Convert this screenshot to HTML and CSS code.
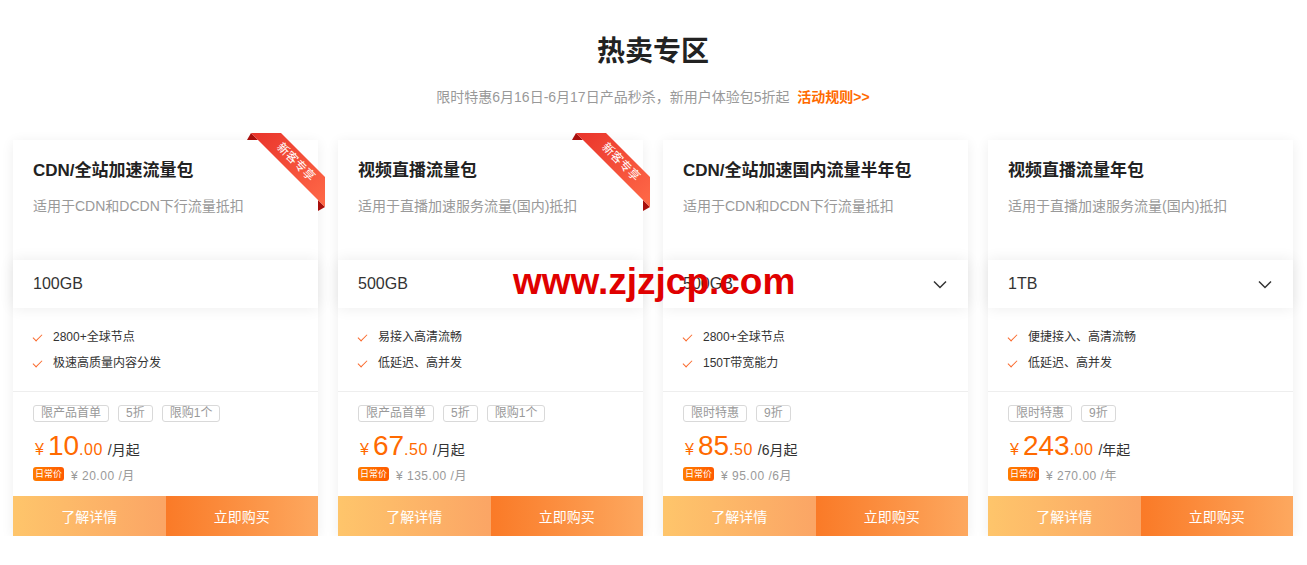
FILE: index.html
```html
<!DOCTYPE html>
<html>
<head>
    <title>热卖专区</title>
    <link rel="stylesheet" href="styles.css">
</head>
<body>
    <div class="hot">
        <h2 class="hot-title">热卖专区</h2>
        <p class="hot-sub">限时特惠6月16日-6月17日产品秒杀，新用户体验包5折起 <a class="rule" href="#">活动规则&gt;&gt;</a></p>

        <div class="cards">
            <div class="card">
                <svg class="ribbon" width="78" height="78" viewBox="0 0 78 78">
                    <defs>
                        <linearGradient id="rb1" x1="0" y1="0" x2="1" y2="1">
                            <stop offset="0" stop-color="#e9342b"/>
                            <stop offset="1" stop-color="#ff6a48"/>
                        </linearGradient>
                    </defs>
                    <polygon points="0,7 4,0 11,7" fill="#a80f0c"/>
                    <polygon points="78,74 71,67 71,78" fill="#a80f0c"/>
                    <polygon points="4,0 34,0 78,44 78,74" fill="url(#rb1)"/>
                    <text x="49" y="33" transform="rotate(45 49 29)" text-anchor="middle" class="ribbon-text">新客专享</text>
                </svg>
                <div class="card-top">
                    <h3>CDN/全站加速流量包</h3>
                    <p>适用于CDN和DCDN下行流量抵扣</p>
                </div>
                <div class="spec">100GB</div>
                <ul class="feats">
                    <li>2800+全球节点</li>
                    <li>极速高质量内容分发</li>
                </ul>
                <div class="buy">
                    <div class="tags"><span>限产品首单</span><span>5折</span><span>限购1个</span></div>
                    <div class="price"><span class="cur">¥</span><span class="int">10</span><span class="dec">.00</span><span class="unit">/月起</span></div>
                    <div class="daily"><span class="badge">日常价</span>¥ 20.00 /月</div>
                </div>
                <div class="btns"><a class="more" href="#">了解详情</a><a class="now" href="#">立即购买</a></div>
            </div>

            <div class="card">
                <svg class="ribbon" width="78" height="78" viewBox="0 0 78 78">
                    <defs>
                        <linearGradient id="rb2" x1="0" y1="0" x2="1" y2="1">
                            <stop offset="0" stop-color="#e9342b"/>
                            <stop offset="1" stop-color="#ff6a48"/>
                        </linearGradient>
                    </defs>
                    <polygon points="0,7 4,0 11,7" fill="#a80f0c"/>
                    <polygon points="78,74 71,67 71,78" fill="#a80f0c"/>
                    <polygon points="4,0 34,0 78,44 78,74" fill="url(#rb2)"/>
                    <text x="49" y="33" transform="rotate(45 49 29)" text-anchor="middle" class="ribbon-text">新客专享</text>
                </svg>
                <div class="card-top">
                    <h3>视频直播流量包</h3>
                    <p>适用于直播加速服务流量(国内)抵扣</p>
                </div>
                <div class="spec">500GB</div>
                <ul class="feats">
                    <li>易接入高清流畅</li>
                    <li>低延迟、高并发</li>
                </ul>
                <div class="buy">
                    <div class="tags"><span>限产品首单</span><span>5折</span><span>限购1个</span></div>
                    <div class="price"><span class="cur">¥</span><span class="int">67</span><span class="dec">.50</span><span class="unit">/月起</span></div>
                    <div class="daily"><span class="badge">日常价</span>¥ 135.00 /月</div>
                </div>
                <div class="btns"><a class="more" href="#">了解详情</a><a class="now" href="#">立即购买</a></div>
            </div>

            <div class="card">
                <div class="card-top">
                    <h3>CDN/全站加速国内流量半年包</h3>
                    <p>适用于CDN和DCDN下行流量抵扣</p>
                </div>
                <div class="spec">500GB
                    <svg class="arrow" width="14" height="9" viewBox="0 0 14 9"><path d="M1 1.5 L7 7.5 L13 1.5" fill="none" stroke="#333" stroke-width="1.5"/></svg>
                </div>
                <ul class="feats">
                    <li>2800+全球节点</li>
                    <li>150T带宽能力</li>
                </ul>
                <div class="buy">
                    <div class="tags"><span>限时特惠</span><span>9折</span></div>
                    <div class="price"><span class="cur">¥</span><span class="int">85</span><span class="dec">.50</span><span class="unit">/6月起</span></div>
                    <div class="daily"><span class="badge">日常价</span>¥ 95.00 /6月</div>
                </div>
                <div class="btns"><a class="more" href="#">了解详情</a><a class="now" href="#">立即购买</a></div>
            </div>

            <div class="card">
                <div class="card-top">
                    <h3>视频直播流量年包</h3>
                    <p>适用于直播加速服务流量(国内)抵扣</p>
                </div>
                <div class="spec">1TB
                    <svg class="arrow" width="14" height="9" viewBox="0 0 14 9"><path d="M1 1.5 L7 7.5 L13 1.5" fill="none" stroke="#333" stroke-width="1.5"/></svg>
                </div>
                <ul class="feats">
                    <li>便捷接入、高清流畅</li>
                    <li>低延迟、高并发</li>
                </ul>
                <div class="buy">
                    <div class="tags"><span>限时特惠</span><span>9折</span></div>
                    <div class="price"><span class="cur">¥</span><span class="int">243</span><span class="dec">.00</span><span class="unit">/年起</span></div>
                    <div class="daily"><span class="badge">日常价</span>¥ 270.00 /年</div>
                </div>
                <div class="btns"><a class="more" href="#">了解详情</a><a class="now" href="#">立即购买</a></div>
            </div>
        </div>

        <div class="watermark">www.zjzjcp.com</div>
    </div>
</body>
</html>
```

FILE: styles.css
```css
body {
    margin: 0;
    background-color: #fff;
    font-family: "Liberation Sans", "Noto Sans CJK SC", sans-serif;
    color: #333;
}
.hot {
    position: relative;
    width: 1280px;
    margin: 0 0 0 13px;
    padding-top: 32px;
}
.hot-title {
    margin: 0;
    font-size: 28px;
    line-height: 40px;
    font-weight: bold;
    color: #222;
    text-align: center;
}
.hot-sub {
    margin: 15px 0 0;
    font-size: 14px;
    line-height: 20px;
    color: #999;
    text-align: center;
}
.rule {
    margin-left: 4px;
    color: #ff6a00;
    font-weight: bold;
    text-decoration: none;
}
.cards {
    display: grid;
    grid-template-columns: repeat(4, 1fr);
    gap: 20px;
    margin-top: 33px;
}
.card {
    position: relative;
    background-color: #fff;
    box-shadow: 0 2px 12px rgba(0, 0, 0, 0.07);
}
.ribbon {
    position: absolute;
    top: -7px;
    right: -7px;
    z-index: 3;
}
.ribbon-text {
    font-family: "Noto Sans CJK SC", sans-serif;
    font-size: 12px;
    fill: #fff;
}
.card-top {
    height: 120px;
    padding: 19px 20px 0;
    box-sizing: border-box;
}
.card-top h3 {
    margin: 0;
    font-size: 17px;
    line-height: 24px;
    font-weight: bold;
    color: #222;
}
.card-top p {
    margin: 13px 0 0;
    font-size: 14px;
    line-height: 20px;
    color: #999;
}
.spec {
    position: relative;
    z-index: 1;
    display: flex;
    justify-content: space-between;
    align-items: center;
    height: 48px;
    padding: 0 20px;
    font-size: 16px;
    color: #333;
    background-color: #fff;
    box-shadow: 0 0 14px rgba(0, 0, 0, 0.08);
}
.arrow {
    margin-right: 1px;
}
.feats {
    list-style: none;
    margin: 0;
    padding: 16px 20px 15px;
    border-bottom: 1px solid #eee;
}
.feats li {
    position: relative;
    padding-left: 20px;
    font-size: 12px;
    line-height: 26px;
    color: #333;
}
.feats li::before {
    content: "";
    position: absolute;
    left: 2px;
    top: 8px;
    width: 4px;
    height: 8px;
    border-right: 1.5px solid #fa6a2c;
    border-bottom: 1.5px solid #fa6a2c;
    transform: rotate(45deg);
}
.buy {
    padding: 13px 20px 15px;
}
.tags {
    display: flex;
    gap: 9px;
}
.tags span {
    height: 15px;
    padding: 0 7px;
    border: 1px solid #d9d9d9;
    border-radius: 3px;
    font-size: 12px;
    line-height: 15px;
    color: #999;
}
.price {
    display: flex;
    align-items: baseline;
    height: 32px;
    margin-top: 8px;
    color: #ff6a00;
}
.price span {
    line-height: 1;
}
.price .cur {
    font-size: 16px;
    margin: 0 4px 0 2px;
}
.price .int {
    font-size: 28px;
    line-height: 32px;
}
.price .dec {
    font-size: 16px;
    letter-spacing: 0.5px;
}
.price .unit {
    margin-left: 5px;
    font-size: 14px;
    color: #333;
}
.daily {
    display: flex;
    align-items: center;
    margin-top: 5px;
    height: 14px;
    font-size: 12px;
    color: #999;
    letter-spacing: 0.5px;
}
.badge {
    height: 14px;
    margin-right: 7px;
    padding: 0 2px;
    border-radius: 3px;
    background: linear-gradient(90deg, #ff7d00, #ff5a00);
    color: #fff;
    font-size: 9px;
    line-height: 14px;
    letter-spacing: 0;
}
.btns {
    display: grid;
    grid-template-columns: 1fr 1fr;
    height: 40px;
}
.btns a {
    display: flex;
    justify-content: center;
    align-items: center;
    font-size: 14px;
    color: #fff;
    text-decoration: none;
}
.btns .more {
    background: linear-gradient(90deg, #fec56b, #fba565);
}
.btns .now {
    background: linear-gradient(90deg, #fa7a27, #fda85f);
}
.watermark {
    position: absolute;
    left: 500px;
    top: 262px;
    z-index: 5;
    font-family: "Liberation Sans", sans-serif;
    font-size: 37px;
    font-weight: bold;
    line-height: 40px;
    color: #e00000;
}
```
